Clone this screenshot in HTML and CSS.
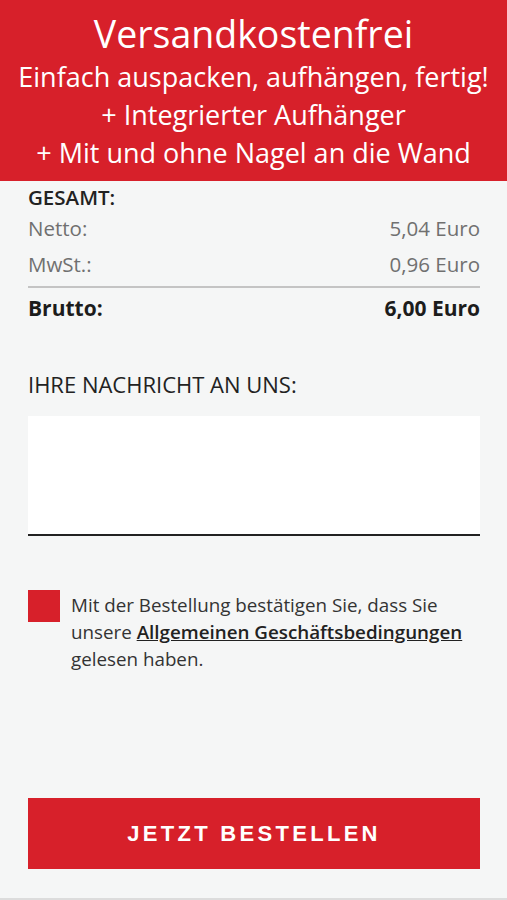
FILE: index.html
```html
<!DOCTYPE html>
<html lang="de">
<head>
<meta charset="utf-8">
<link rel="stylesheet" href="styles.css">
</head>
<body>
<header class="banner">
  <div class="banner-title">Versandkostenfrei</div>
  <div class="banner-line">Einfach auspacken, aufhängen, fertig!</div>
  <div class="banner-line">+ Integrierter Aufhänger</div>
  <div class="banner-line">+ Mit und ohne Nagel an die Wand</div>
</header>
<main class="content">
  <section class="totals">
    <div class="totals-head">GESAMT:</div>
    <div class="row"><span>Netto:</span><span>5,04 Euro</span></div>
    <div class="row"><span>MwSt.:</span><span>0,96 Euro</span></div>
    <div class="row brutto"><span>Brutto:</span><span>6,00 Euro</span></div>
  </section>
  <section class="message">
    <div class="message-label">IHRE NACHRICHT AN UNS:</div>
    <div class="message-box"></div>
  </section>
  <section class="agb">
    <span class="check"></span>
    <p class="agb-text">Mit der Bestellung bestätigen Sie, dass Sie unsere <a class="agb-link">Allgemeinen Geschäftsbedingungen</a> gelesen haben.</p>
  </section>
  <button class="order">JETZT BESTELLEN</button>
</main>
<div class="bottom-line"></div>
</body>
</html>
```
FILE: styles.css
```css
html, body {
  margin: 0;
  padding: 0;
}
body {
  width: 507px;
  height: 900px;
  background: #f5f6f6;
  font-family: "Open Sans", "Noto Sans", sans-serif;
  color: #222;
  overflow: hidden;
  position: relative;
}
.banner {
  background: #d7202a;
  color: #fff;
  text-align: center;
  height: 181px;
  padding-top: 10px;
  box-sizing: border-box;
}
.banner-title {
  font-size: 37.5px;
  line-height: 48px;
}
.banner-line {
  font-size: 27px;
  line-height: 38px;
  white-space: nowrap;
}
.content {
  padding: 0 27px 0 28px;
}
.totals {
  padding-top: 3px;
}
.totals-head {
  font-size: 20.5px;
  font-weight: 600;
  line-height: 26px;
  color: #222;
}
.row {
  display: flex;
  justify-content: space-between;
  font-size: 20.5px;
  line-height: 36px;
  color: #707070;
  font-weight: 400;
}
.row.brutto {
  border-top: 2px solid #c4c4c4;
  margin-top: 4px;
  padding-top: 2px;
  font-weight: 700;
  font-size: 21px;
  color: #1c1c1c;
}
.message {
  padding-top: 46px;
}
.message-label {
  font-size: 22px;
  font-weight: 500;
  line-height: 24px;
  color: #222;
}
.message-box {
  margin-top: 20px;
  height: 118px;
  background: #fff;
  border-bottom: 2px solid #222;
}
.agb {
  display: flex;
  align-items: flex-start;
  gap: 11px;
  margin-top: 54px;
}
.check {
  flex: none;
  width: 32px;
  height: 32px;
  background: #d7202a;
}
.agb-text {
  margin: 0;
  margin-top: 2px;
  font-size: 18.8px;
  line-height: 27px;
  color: #333;
}
.agb-link {
  font-weight: 600;
  text-decoration: underline;
  color: #222;
}
.order {
  display: block;
  width: 100%;
  margin-top: 125px;
  height: 71px;
  border: none;
  background: #d7202a;
  color: #fff;
  font-family: "Liberation Sans", Arial, sans-serif;
  font-weight: 700;
  font-size: 22px;
  letter-spacing: 3.3px;
  padding: 0;
}
.bottom-line {
  position: absolute;
  left: 0;
  right: 0;
  bottom: 0;
  height: 2px;
  background: #dcdcdc;
}
```
